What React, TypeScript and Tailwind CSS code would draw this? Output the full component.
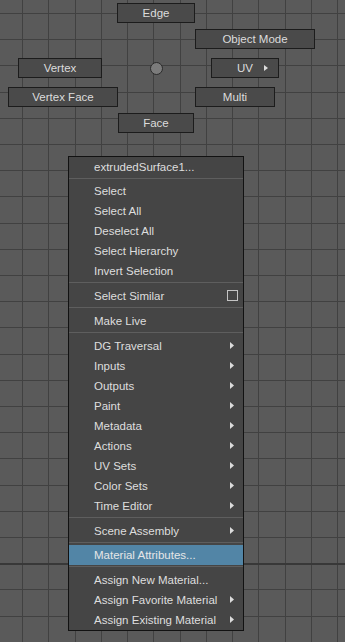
import React from "react";

const V_LINES = Array.from({ length: 13 }, (_, k) => Math.round(22 + 26.25 * k));
const H_LINES = Array.from({ length: 25 }, (_, k) => Math.round(13 + 26.2 * k));

function Grid() {
  return (
    <svg className="absolute inset-0" width={345} height={642} shapeRendering="crispEdges">
      {V_LINES.map((x) => (
        <rect key={"v" + x} x={x} y={0} width={1} height={642} fill="#414141" />
      ))}
      {H_LINES.map((y) => (
        <rect key={"h" + y} x={0} y={y} width={345} height={y === 563 ? 2 : 1} fill={y === 563 ? "#383838" : "#414141"} />
      ))}
    </svg>
  );
}

function Arrow({ w = 4, h = 7 }: { w?: number; h?: number }) {
  return (
    <svg width={w} height={h} viewBox={`0 0 ${w} ${h}`} className="block">
      <polygon points={`0,0 ${w},${h / 2} 0,${h}`} fill="#dcdcdc" />
    </svg>
  );
}

type Item =
  | { kind: "item"; label: string; sub?: boolean; check?: boolean; active?: boolean }
  | { kind: "sep"; h: 4 | 5 };

const ITEMS: Item[] = [
  { kind: "item", label: "extrudedSurface1..." },
  { kind: "sep", h: 4 },
  { kind: "item", label: "Select" },
  { kind: "item", label: "Select All" },
  { kind: "item", label: "Deselect All" },
  { kind: "item", label: "Select Hierarchy" },
  { kind: "item", label: "Invert Selection" },
  { kind: "sep", h: 5 },
  { kind: "item", label: "Select Similar", check: true },
  { kind: "sep", h: 5 },
  { kind: "item", label: "Make Live" },
  { kind: "sep", h: 5 },
  { kind: "item", label: "DG Traversal", sub: true },
  { kind: "item", label: "Inputs", sub: true },
  { kind: "item", label: "Outputs", sub: true },
  { kind: "item", label: "Paint", sub: true },
  { kind: "item", label: "Metadata", sub: true },
  { kind: "item", label: "Actions", sub: true },
  { kind: "item", label: "UV Sets", sub: true },
  { kind: "item", label: "Color Sets", sub: true },
  { kind: "item", label: "Time Editor", sub: true },
  { kind: "sep", h: 5 },
  { kind: "item", label: "Scene Assembly", sub: true },
  { kind: "sep", h: 4 },
  { kind: "item", label: "Material Attributes...", active: true },
  { kind: "sep", h: 5 },
  { kind: "item", label: "Assign New Material..." },
  { kind: "item", label: "Assign Favorite Material", sub: true },
  { kind: "item", label: "Assign Existing Material", sub: true },
];

function MarkButton({
  label,
  className,
  arrow,
}: {
  label: string;
  className: string;
  arrow?: boolean;
}) {
  return (
    <div
      className={
        "absolute h-[20px] flex items-center justify-center pt-[2px] border border-[#1c1c1c] bg-[#4a4a4a] text-[#dcdcdc] " +
        className
      }
    >
      <span className="leading-none">{label}</span>
      {arrow && (
        <span className="absolute right-[10px] top-[6px]">
          <Arrow w={4} h={6} />
        </span>
      )}
    </div>
  );
}

export default function App() {
  return (
    <div className="relative w-[345px] h-[642px] overflow-hidden bg-[#5a5a5a] font-['Liberation_Sans',Arial,sans-serif] text-[11.5px]">
      <Grid />

      <MarkButton label="Edge" className="left-[117px] top-[3px] w-[78px]" />
      <MarkButton label="Object Mode" className="left-[195px] top-[29px] w-[120px]" />
      <MarkButton label="Vertex" className="left-[18px] top-[58px] w-[84px]" />
      <MarkButton label="UV" className="left-[211px] top-[58px] w-[68px]" arrow />
      <MarkButton label="Vertex Face" className="left-[8px] top-[87px] w-[110px]" />
      <MarkButton label="Multi" className="left-[195px] top-[87px] w-[80px]" />
      <MarkButton label="Face" className="left-[118px] top-[113px] w-[76px]" />

      <div className="absolute left-[150px] top-[62px] w-[13px] h-[13px] rounded-full border border-[#2a2a2a] bg-[#7b7b7b]" />

      <div className="absolute left-[68px] top-[156px] w-[176px] border border-[#121212] bg-[#454545] flex flex-col text-[#dedede]">
        {ITEMS.map((it, i) =>
          it.kind === "sep" ? (
            <div key={i} className={it.h === 4 ? "h-[4px] pt-[1px]" : "h-[5px] pt-[1px]"}>
              <div className="h-px bg-[#5e5e5e]" />
            </div>
          ) : (
            <div
              key={i}
              className={
                "relative h-[20px] flex items-center pl-[25px] pt-[2px] " +
                (it.active ? "bg-[#5285a6] text-[#e6e6e6]" : "")
              }
            >
              <span className="leading-none whitespace-nowrap">{it.label}</span>
              {it.sub && (
                <span className="absolute right-[9px] top-[6px]">
                  <Arrow />
                </span>
              )}
              {it.check && (
                <span className="absolute right-[5px] top-[4px] w-[11px] h-[11px] border border-[#c4c4c4]" />
              )}
            </div>
          )
        )}
      </div>
    </div>
  );
}
